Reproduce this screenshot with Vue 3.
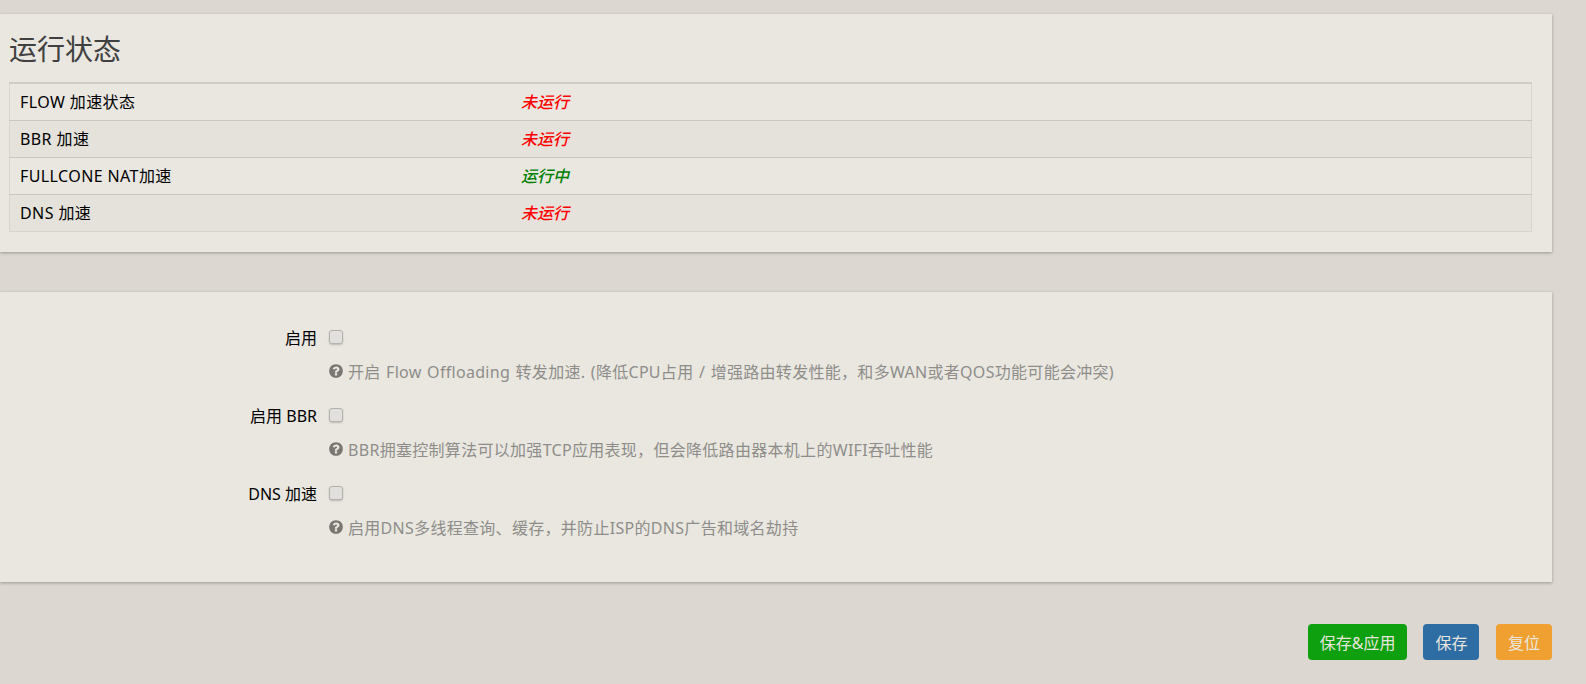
<template>
  <div class="page">
    <section class="card status-card">
      <h3 class="title">运行状态</h3>
      <table class="status-table">
        <tbody>
          <tr v-for="row in statusRows" :key="row.name">
            <td class="name-cell">{{ row.name }}</td>
            <td><em class="state" :class="row.on ? 'on' : 'off'">{{ row.on ? '运行中' : '未运行' }}</em></td>
          </tr>
        </tbody>
      </table>
    </section>

    <section class="card options-card">
      <div v-for="opt in options" :key="opt.label" class="option">
        <label class="option-label">{{ opt.label }}</label>
        <div class="option-field">
          <div class="check-line"><input type="checkbox" class="check" /></div>
          <div class="help">
            <svg class="help-icon" viewBox="0 0 1792 1792"><path fill="currentColor" d="M1024 1376v-192q0-14-9-23t-23-9h-192q-14 0-23 9t-9 23v192q0 14 9 23t23 9h192q14 0 23-9t9-23zm256-672q0-88-55.5-163t-138.5-116-170-41q-243 0-371 213-15 24 8 42l132 100q7 6 19 6 16 0 25-12 53-68 86-92 34-24 86-24 48 0 85.5 26t37.5 59q0 38-20 61t-68 45q-63 28-115.5 86.5t-52.5 125.5v36q0 14 9 23t23 9h192q14 0 23-9t9-23q0-19 21.5-49.5t54.5-49.5q32-18 49-28.5t46-35 44.5-48 28-60.5 12.5-81zm384 192q0 209-103 385.5t-279.5 279.5-385.5 103-385.5-103-279.5-279.5-103-385.5 103-385.5 279.5-279.5 385.5-103 385.5 103 279.5 279.5 103 385.5z"/></svg>
            <span>{{ opt.help }}</span>
          </div>
        </div>
      </div>
    </section>

    <div class="actions">
      <button class="btn green">保存&amp;应用</button>
      <button class="btn blue">保存</button>
      <button class="btn orange">复位</button>
    </div>
  </div>
</template>

<script setup>
const statusRows = [
  { name: 'FLOW 加速状态', on: false },
  { name: 'BBR 加速', on: false },
  { name: 'FULLCONE NAT加速', on: true },
  { name: 'DNS 加速', on: false }
];

const options = [
  { label: '启用', help: '开启 Flow Offloading 转发加速. (降低CPU占用 / 增强路由转发性能，和多WAN或者QOS功能可能会冲突)' },
  { label: '启用 BBR', help: 'BBR拥塞控制算法可以加强TCP应用表现，但会降低路由器本机上的WIFI吞吐性能' },
  { label: 'DNS 加速', help: '启用DNS多线程查询、缓存，并防止ISP的DNS广告和域名劫持' }
];
</script>

<style>
html, body {
  margin: 0;
  background: #dcd7d1;
}
</style>

<style scoped>
.page {
  height: 684px;
  overflow: hidden;
  padding: 14px 34px 0 0;
  box-sizing: border-box;
  background: #dcd7d1;
  font-family: "Noto Sans", "Noto Sans CJK SC", sans-serif;
}
.card {
  background: #eae7e0;
  box-shadow: 0 1px 3px rgba(0, 0, 0, 0.3);
}
.status-card {
  height: 238px;
  box-sizing: border-box;
  padding: 17px 20px 0 9px;
}
.title {
  margin: 0 0 15px;
  height: 36px;
  line-height: 36px;
  font-size: 28px;
  font-weight: 400;
  color: #404040;
}
.status-table {
  width: 100%;
  border-collapse: collapse;
  table-layout: fixed;
  font-size: 16px;
  color: #000;
  border-top: 2px solid #cfcbc5;
}
.status-table td {
  height: 36px;
  padding: 0 10px;
  border-top: 1px solid #c9c5bf;
  border-bottom: 1px solid #c9c5bf;
  line-height: 20px;
}
.status-table td:first-child {
  border-left: 1px solid #d8d4ce;
}
.status-table td:last-child {
  border-right: 1px solid #d8d4ce;
}
.status-table tr:last-child td {
  border-bottom-color: #d8d4ce;
}
.status-table tr:nth-child(even) {
  background: #e5e2db;
}
.name-cell {
  width: 481px;
  letter-spacing: 0.4px;
}
.state {
  font-weight: 500;
}
.off { color: #f00; }
.on { color: #008000; }

.options-card {
  margin-top: 40px;
  height: 290px;
  box-sizing: border-box;
  padding-top: 28px;
}
.option {
  display: flex;
  height: 78px;
}
.option-label {
  width: 317px;
  text-align: right;
  font-size: 16px;
  line-height: 36px;
  color: #000;
}
.option-field {
  margin-left: 12px;
}
.check-line {
  height: 34px;
  display: flex;
  align-items: center;
}
.check {
  appearance: none;
  margin: 0;
  width: 14px;
  height: 14px;
  box-sizing: border-box;
  background: #e2e0dc;
  border: 1px solid #b5b1ab;
  border-radius: 3px;
  box-shadow: 0 1px 2px rgba(0, 0, 0, 0.2);
}
.help {
  display: flex;
  align-items: center;
  height: 34px;
  font-size: 16px;
  letter-spacing: 0.3px;
  word-spacing: 1px;
  color: #8e8d8a;
  white-space: nowrap;
}
.help-icon {
  width: 16px;
  height: 16px;
  margin-left: -1px;
  margin-right: 4px;
  color: #7a7772;
}

.actions {
  display: flex;
  justify-content: flex-end;
  gap: 16.5px;
  margin-top: 42px;
}
.btn {
  height: 36px;
  padding: 0 12px;
  border: 0;
  border-radius: 4px;
  font-family: inherit;
  font-size: 16px;
  color: #e9e6df;
}
.green {
  padding: 0 11.5px;
  background: #0fa00f;
}
.blue { background: #2e6da4; }
.orange { background: #f0a030; }
</style>
